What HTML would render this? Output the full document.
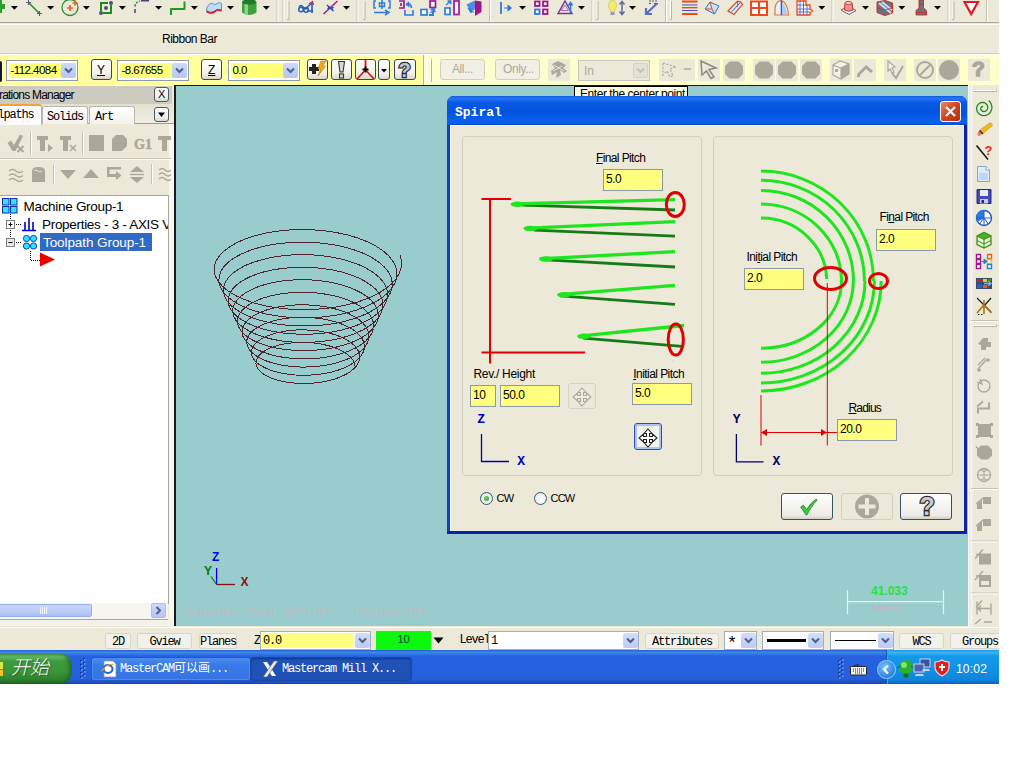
<!DOCTYPE html>
<html><head><meta charset="utf-8"><title>Mastercam Spiral</title>
<style>
html,body{margin:0;padding:0;background:#fff;}
body{width:1024px;height:768px;overflow:hidden;position:relative;font-family:"Liberation Sans",sans-serif;font-size:12px;color:#000;}
#scr{position:absolute;left:0;top:0;width:999px;height:684px;overflow:hidden;background:#ECE9D8;}
.abs,#scr div,#scr span,#scr svg{position:absolute;box-sizing:border-box;}
.mono{font-family:"Liberation Mono","Noto Sans CJK SC",monospace;font-size:11px;letter-spacing:-0.6px;white-space:nowrap;}
.sans{font-family:"Liberation Sans",sans-serif;white-space:nowrap;}
/* top toolbar */
#tb1{left:0;top:0;width:999px;height:23px;background:#ECE9D8;border-bottom:1px solid #A9A798;}
#rb{left:0;top:24px;width:999px;height:30px;background:#ECE9D8;border-top:1px solid #fff;border-bottom:1px solid #CFCCBE;}
#yb{left:0;top:54px;width:999px;height:31px;background:#FFFFA0;border-top:1px solid #fff;}
.combo{background:#fff;border:1px solid #8E9CA8;}
.combo .fill{background:#FFFF80;}
.dd{background:#C6D4FA;border-radius:2px;}
.xpbtn{border:1px solid #35506E;border-radius:3px;background:linear-gradient(#fff,#ECEBE5 85%,#D2D0C4);}
.dis{background:#ECE9D8;}
/* viewport */
#vp{left:174px;top:85px;width:794px;height:541px;background:#99CCCC;border-left:2px solid #1a1a1a;border-top:1px solid #1a1a1a;}

/* dialog */
#dlg{left:447px;top:96px;width:520px;height:438px;border-radius:7px 7px 0 0;background:#0A22AE;overflow:hidden;}
#dlgt{left:0;top:0;width:520px;height:29px;background:linear-gradient(#0B5CE2 0%,#2A74F8 8%,#0A5AE6 22%,#0452DC 55%,#0862EE 86%,#0560E8 94%,#0340C0 100%);}
#dlgb{left:3px;top:29px;width:514px;height:406px;background:#ECE9D8;border-top:1px solid #fff;border-left:1px solid #fff;}
.gb{border:1px solid #D0D0BF;border-radius:4px;}
.ed{background:#FFFF80;border:1px solid #8A9AA8;font-size:12px;letter-spacing:-0.5px;padding:2px 0 0 2px;white-space:nowrap;}
.lb{font-size:12px;letter-spacing:-0.35px;white-space:nowrap;line-height:14px;}
u{text-decoration:underline;text-underline-offset:1px;}

/* ops manager */
#om{left:0;top:85px;width:174px;height:542px;background:#ECE9D8;}
#omt{left:0;top:0;width:172px;height:19px;background:#CDCAC0;border-top:1px solid #fff;}
.sbtn{border:1px solid #4B5B6B;border-radius:3px;background:linear-gradient(#fff,#F0EFE8 70%,#DAD8CC);}
.tab{top:21px;height:18px;border:1px solid #B5B8A8;border-bottom:none;border-radius:3px 3px 0 0;background:linear-gradient(#fff,#F3F2EC);}
.g{fill:#ACA899;stroke:none;}

#st{left:0;top:627px;width:999px;height:24px;background:#ECE9D8;border-top:1px solid #fff;}
.stb{top:5px;height:16px;border:1px solid #D8D5C6;border-radius:3px;background:#F3F2EA;text-align:center;}
.stb span{position:static !important;font-size:12px;letter-spacing:-1.2px;line-height:13px;}
.scombo{top:3px;height:19px;background:#fff;border:1px solid #9DB0C0;}
.sdd{top:1px;width:15px;height:15px;border-radius:2px;background:linear-gradient(#D3DDFB,#BCCBF6);}
#tk{left:0;top:650px;width:999px;height:34px;background:linear-gradient(#2A5FD0 0%,#3C88EA 7%,#2662E0 18%,#2561DD 50%,#2460DB 85%,#1A44B0 100%);}

.yc{top:5px;height:21px;background:#fff;border:1px solid #8E9CA8;}
.yc .f{left:2px;top:2px;height:15px;background:#FFFF78;}
.yc .t{left:3.5px;top:2px;font-size:11.5px;letter-spacing:-0.55px;line-height:15px;}
.yc .d{top:2px;width:15px;height:15px;border-radius:2px;background:linear-gradient(#CDD9FB,#B6C7F5);}
.yb{top:4px;height:21px;border:1px solid #2C4A6C;border-radius:3px;background:linear-gradient(#fff,#F2F1EA 70%,#D9D7CA);}
.yd{top:4px;width:22px;height:22px;background:#ECE9D8;}
</style></head><body>
<div id="scr">
<div id="tb1"><svg width="999" height="22" viewBox="0 0 999 22" style="left:0;top:0;"><path d="M0 4 H2 V0 H0 Z M0 4 H5 V9 H2 V13 H0 Z" fill="#2CA02C"/><path d="M10.9 6 H17.9 L14.4 9.8 Z" fill="#000"/><path d="M47.1 6 H54.1 L50.6 9.8 Z" fill="#000"/><path d="M82.9 6 H89.9 L86.4 9.8 Z" fill="#000"/><path d="M118.9 6 H125.9 L122.4 9.8 Z" fill="#000"/><path d="M155.1 6 H162.1 L158.6 9.8 Z" fill="#000"/><path d="M190.9 6 H197.9 L194.4 9.8 Z" fill="#000"/><path d="M227.0 6 H234.0 L230.5 9.8 Z" fill="#000"/><path d="M262.8 6 H269.8 L266.3 9.8 Z" fill="#000"/><path d="M29 3 L39 13" stroke="#2C8C2C" stroke-width="1.6"/><path d="M26 2.5 h5 m-2.5 -2.5 v5 M37 13.5 h5 m-2.5 -2.5 v5" stroke="#50607A" stroke-width="1.1"/><circle cx="70" cy="7.5" r="8" fill="none" stroke="#2C8C2C" stroke-width="1.3"/><path d="M67 8 h6 m-3 -3 v6 M72.5 3 h5 m-2.5 -2.5 v5" stroke="#F06020" stroke-width="1.7"/><path d="M101 3 H111 V13 H101 Z" fill="none" stroke="#1C8C1C" stroke-width="2"/><rect x="108" y="0" width="5" height="5" fill="#ECE9D8"/><rect x="99" y="11" width="4" height="4" fill="#ECE9D8"/><circle cx="111" cy="3" r="2" fill="#50507A"/><circle cx="101" cy="13" r="2" fill="#50507A"/><circle cx="106" cy="8" r="2" fill="#50507A"/><path d="M135 13 V9" stroke="#50507A" stroke-width="1.6"/><path d="M135 6.5 Q135.5 2 140 1" stroke="#1C8C1C" stroke-width="1.6" fill="none" stroke-dasharray="2 1.5"/><rect x="141" y="0" width="8" height="1.5" fill="#50407A"/><path d="M171 15 V9 H184.5 V1.5" stroke="#1C9C1C" stroke-width="2" fill="none" stroke-linejoin="round"/><path d="M206.5 11 Q207 4 212 3 Q214 6 217 3.5 Q220 1.5 221.5 3.5 V10.5 Q217.5 8 215 11 Q211 13.5 206.5 11 Z" fill="#BCDCF8" stroke="#3C7CD0" stroke-width="0.8"/><path d="M206.5 11.5 Q211 14.5 215 11.5 Q217.5 8.5 221.5 11" stroke="#E01818" stroke-width="1.6" fill="none"/><path d="M242 2 V12.5 Q249 17.5 256.5 12.5 V2 Z" fill="#3CA03C"/><ellipse cx="249.2" cy="2" rx="7.2" ry="2.8" fill="#1C7C2C"/><path d="M244.5 4 V13.8 Q246 14.6 248 15 V4.6 Z" fill="#A4DCA4" opacity="0.8"/><path d="M277 0 V22" stroke="#C5C2B4"/><path d="M278 0 V22" stroke="#fff"/><path d="M283 0 V22" stroke="#C5C2B4"/><path d="M284 0 V22" stroke="#fff"/><path d="M288 1 V19" stroke="#fff" stroke-width="1"/><path d="M289 1 V19.5 H287" stroke="#B8B5A5" fill="none"/><path d="M299 7 q2 -3 4 0 q3 4 5 0 M305 9 L312 3 M307 11 L313 11 M312 3 V13" stroke="#2060C0" stroke-width="1.6" fill="none"/><circle cx="301" cy="9.5" r="2.3" fill="none" stroke="#2060C0" stroke-width="1.5"/><circle cx="306" cy="10" r="2.3" fill="none" stroke="#2060C0" stroke-width="1.5"/><path d="M309 4 L312.5 1.5 L313.5 5" stroke="#C02080" stroke-width="1.2" fill="none"/><path d="M323.5 14 L337.5 1" stroke="#A8208C" stroke-width="1.6"/><path d="M327 5 L333.5 11" stroke="#2050C0" stroke-width="1.6"/><path d="M329 6 l1 3 l-3 0z M332 10 l-1 -3 l3 0z" fill="#2050C0"/><path d="M343.0 6 H350.0 L346.5 9.8 Z" fill="#000"/><path d="M357 0 V22" stroke="#C5C2B4"/><path d="M358 0 V22" stroke="#fff"/><path d="M364 1 V19" stroke="#fff" stroke-width="1"/><path d="M365 1 V19.5 H363" stroke="#B8B5A5" fill="none"/><path d="M376 1 H374 V8 H376 M388 1 H390 V8 H388 M382 0 V9 M379.5 3 h5 v3.5 h-5z" stroke="#2C7CE0" stroke-width="1.5" fill="none"/><path d="M374 12.5 H387 M385 10 L389 12.5 L385 15" stroke="#2C7CE0" stroke-width="1.5" fill="none"/><path d="M399 1 H404 V8 H399 M401 3 v3" stroke="#A0148C" stroke-width="1.7" fill="none"/><path d="M405 10 V15 H413 V10 M407 4 Q411 3 411.5 8 M409 2 L406.5 4.5 L409.5 6.5" stroke="#2C7CE0" stroke-width="1.6" fill="none"/><rect x="430" y="1" width="5.5" height="6.5" fill="#fff" stroke="#A0148C" stroke-width="1.7"/><rect x="421" y="9.5" width="6" height="5.5" fill="#fff" stroke="#2C7CE0" stroke-width="1.7"/><path d="M429 15 H433 V11.5 M431 10 L433 8.5 L435 10" stroke="#2C7CE0" stroke-width="2" fill="none"/><path d="M429.5 13 L434 9 L436 12 Z" fill="#2C7CE0"/><rect x="454" y="1" width="5" height="13.5" fill="#fff" stroke="#A0148C" stroke-width="1.7"/><rect x="445" y="8" width="5" height="6.5" fill="#fff" stroke="#2C7CE0" stroke-width="1.7"/><path d="M446 5 L450.5 1 M447.5 1 h3.2 v3.2" stroke="#2C7CE0" stroke-width="1.5" fill="none"/><path d="M466.5 4.5 L475 0.5 V9 L471 12.5 Z" fill="#4C8CE8"/><path d="M475 0.5 L481.5 1.5 V12 L475 16 Z" fill="#A0148C"/><path d="M468 8 l4 2 -1 3 z M471 11 l3 1.5" fill="#2C7CE0" stroke="#2C7CE0"/><path d="M489.5 0 V22" stroke="#C5C2B4"/><path d="M490.5 0 V22" stroke="#fff"/><path d="M501 2 V14" stroke="#2C7CE0" stroke-width="1.8"/><path d="M504 8 H511 M508 5 L511.5 8 L508 11 Z" stroke="#2C7CE0" fill="#2C7CE0"/><path d="M519.0 6 H526.0 L522.5 9.8 Z" fill="#000"/><rect x="535" y="1.5" width="4.5" height="4.5" fill="#fff" stroke="#A0148C" stroke-width="1.8"/><rect x="543" y="1.5" width="4.5" height="4.5" fill="#fff" stroke="#A0148C" stroke-width="1.8"/><rect x="535" y="9.5" width="4.5" height="4.5" fill="#fff" stroke="#2C7CE0" stroke-width="1.8"/><rect x="543" y="9.5" width="4.5" height="4.5" fill="#fff" stroke="#A0148C" stroke-width="1.8"/><path d="M558 13.5 L565 1 L572 13.5 Z" fill="none" stroke="#7C2C9C" stroke-width="1.4"/><path d="M561 10.5 L565 5 L568.5 10.5 Z" fill="none" stroke="#9C5CB8" stroke-width="0.9"/><path d="M570.5 13 V4 M568.5 5.5 L570.5 2.5 L572.5 5.5" stroke="#2C7CE0" stroke-width="1.6" fill="none"/><path d="M578.0 6 H585.0 L581.5 9.8 Z" fill="#000"/><path d="M592 0 V22" stroke="#C5C2B4"/><path d="M593 0 V22" stroke="#fff"/><path d="M597 1 V19" stroke="#fff" stroke-width="1"/><path d="M598 1 V19.5 H596" stroke="#B8B5A5" fill="none"/><path d="M608.5 6 Q608.5 0.5 612.5 0.5 Q616.5 0.5 616.5 6 Q616 8.5 614.5 10 V12 H610.5 V10 Q609 8.5 608.5 6 Z" fill="#F4EC6C" stroke="#C8C040" stroke-width="0.6"/><rect x="610.5" y="12" width="4" height="3" fill="#9C9CA8"/><path d="M622 2 V14 M619.5 4.5 L622 1.5 L624.5 4.5 M619.5 11.5 L622 14.5 L624.5 11.5" stroke="#5C6CA0" stroke-width="1.5" fill="none"/><path d="M629.0 6 H636.0 L632.5 9.8 Z" fill="#000"/><path d="M657 3.5 L647 13 M646 8 V14 H652" stroke="#5C6CC0" stroke-width="2.2" fill="none"/><path d="M649 1 h9 M649 3.5 h3 m2 0 h4" stroke="#50507A" stroke-width="1.2" stroke-dasharray="2 1"/><path d="M665.5 0 V22" stroke="#C5C2B4"/><path d="M666.5 0 V22" stroke="#fff"/><path d="M670.5 1 V19" stroke="#fff" stroke-width="1"/><path d="M671.5 1 V19.5 H669.5" stroke="#B8B5A5" fill="none"/><path d="M682 1.5 H697.5 M682 14 H697.5" stroke="#F04818" stroke-width="2.2"/><path d="M682 5 H697.5 M682 10.5 H697.5" stroke="#4C50C0" stroke-width="1.2"/><path d="M682 7.7 H697.5" stroke="#F04818" stroke-width="1.4"/><path d="M705 9 L710 2 L719 6 L714.5 14 Z" fill="#C8E4F8" stroke="#3C6CC0" stroke-width="1"/><path d="M710 2 L712 9 L714.5 14 M705 9 L712 9" stroke="#F04818" stroke-width="1" fill="none"/><path d="M728 11 L737 1.5 Q741 1 742.5 4.5 L734 14.5 Z" fill="#D8ECFA" stroke="#F04818" stroke-width="1.2"/><path d="M731 12.5 L740 3 M737 1.5 Q738.5 4 737 7" stroke="#3C6CC0" stroke-width="1" fill="none"/><path d="M751 1.5 H767 V15 H751 Z M751 8 H767 M759 1.5 V15" fill="#fff" stroke="#F04818" stroke-width="2"/><path d="M775 15 V8 Q776 1 781.5 0.5 Q787.5 3 788.5 15 Z" fill="#E8F0FA" stroke="#E87030" stroke-width="1.2"/><path d="M781.5 0.5 V15" stroke="#3060C0" stroke-width="1.6"/><path d="M782.5 3 Q786 6 787 14 H782.5 Z" fill="#A8CCF0"/><path d="M797 1 H806 V5 H810 V9 L812.5 11 L810 13 V15 H797 Z" fill="#fff" stroke="#F04818" stroke-width="1.3"/><path d="M800 1 V15 M803.5 1 V15 M807 5 V15 M797 5 H806 M797 9 H810 M797 12 H810" stroke="#4C60D0" stroke-width="0.9"/><path d="M818.3 6 H825.3 L821.8 9.8 Z" fill="#000"/><path d="M832 0 V22" stroke="#C5C2B4"/><path d="M833 0 V22" stroke="#fff"/><path d="M841 10 L848 6.5 L856 10.5 L849 14.5 Z" fill="#fff" stroke="#606070" stroke-width="1"/><path d="M845 3 Q848.5 0.5 852 3 L853 10 Q848.5 12.5 844.5 10 Z" fill="#F09090" stroke="#C03030" stroke-width="1"/><ellipse cx="848.5" cy="3" rx="3.5" ry="1.6" fill="#F8C0C0" stroke="#C03030" stroke-width="0.8"/><path d="M862.0 6 H869.0 L865.5 9.8 Z" fill="#000"/><path d="M877 2 L885 0.5 L892.5 3 V13 L885 15.5 L877 12.5 Z" fill="#70707C" stroke="#C03030" stroke-width="1"/><path d="M879 3 L891 13 M882 2 L892 10" stroke="#C8DCF0" stroke-width="2.2"/><path d="M877 8 L885 10 L892.5 8" stroke="#C03030" stroke-width="0.8" fill="none"/><path d="M898.3 6 H905.3 L901.8 9.8 Z" fill="#000"/><path d="M919 0 H923.5 V8 L926.5 10.5 V15 H916 V10.5 L919 8 Z" fill="#707078" stroke="#C03030" stroke-width="0.9"/><path d="M916 12.5 H926.5 M919 4 H923.5" stroke="#C03030" stroke-width="0.9"/><path d="M934.0 6 H941.0 L937.5 9.8 Z" fill="#000"/><path d="M948 0 V22" stroke="#C5C2B4"/><path d="M949 0 V22" stroke="#fff"/><path d="M953 1 V19" stroke="#fff" stroke-width="1"/><path d="M954 1 V19.5 H952" stroke="#B8B5A5" fill="none"/><path d="M964.5 2 H978 L971.2 14 Z" fill="#fff" stroke="#E01828" stroke-width="2.2" stroke-linejoin="miter"/><path d="M986.5 0 V22" stroke="#C5C2B4"/><path d="M987.5 0 V22" stroke="#fff"/></svg></div>
<div id="rb"><span class="sans" style="left:162px;top:7px;font-size:12px;letter-spacing:-0.5px;">Ribbon Bar</span></div>
<div id="yb"><div style="left:-3px;top:6px;width:5px;height:21px;background:#101840;border-radius:2px;"></div><div class="yc" style="left:6px;width:72px;"><div class="f" style="width:52px;"></div><span class="t sans">-112.4084</span><div class="d" style="left:54px;"><svg width="15" height="15" style="left:0;top:0"><path d="M4 5.5 L7.5 9 L11 5.5" stroke="#4D6185" stroke-width="2" fill="none"/></svg></div></div><div class="yb" style="left:91px;width:21px;"><span class="sans" style="left:5px;top:3px;font-size:12px;line-height:14px;"><u>Y</u></span></div><div class="yc" style="left:117px;width:72px;"><div class="f" style="width:52px;"></div><span class="t sans">-8.67655</span><div class="d" style="left:54px;"><svg width="15" height="15" style="left:0;top:0"><path d="M4 5.5 L7.5 9 L11 5.5" stroke="#4D6185" stroke-width="2" fill="none"/></svg></div></div><div class="yb" style="left:201px;width:21px;"><span class="sans" style="left:6px;top:3px;font-size:12px;line-height:14px;"><u>Z</u></span></div><div class="yc" style="left:228px;width:72px;"><div class="f" style="width:52px;"></div><span class="t sans">0.0</span><div class="d" style="left:54px;"><svg width="15" height="15" style="left:0;top:0"><path d="M4 5.5 L7.5 9 L11 5.5" stroke="#4D6185" stroke-width="2" fill="none"/></svg></div></div><div class="yb" style="left:307px;width:21px;"><svg width="19" height="20" style="left:0;top:0"><path d="M1 7 H4 V4 H8 V7 H11 V11 H8 V14 H4 V11 H1 Z" fill="#222"/><path d="M13 1 L18 1 L14.5 6 L17.5 6 L10 16 L12.5 9 L10 9 Z" fill="#F8A818" stroke="#C07008" stroke-width="0.6"/></svg></div><div class="yb" style="left:331px;width:21px;"><svg width="19" height="20" style="left:0;top:0"><path d="M6.5 1.5 H12.5 L11 12 H8 Z" fill="#D8D8D8" stroke="#333" stroke-width="1.1"/><rect x="7.5" y="14" width="4" height="4" fill="#D8D8D8" stroke="#333" stroke-width="1.1"/></svg></div><div class="yb" style="left:355px;width:21px;"><svg width="19" height="20" style="left:0;top:0"><path d="M9.5 0 V10 L1 19 M9.5 10 L18 19" stroke="#D81818" stroke-width="1.8" fill="none"/><path d="M6.5 9.5 h6 M9.5 6.5 v6" stroke="#000" stroke-width="1.8"/></svg></div><div class="yb" style="left:378px;width:12px;"><svg width="10" height="20" style="left:0;top:0"><path d="M2 9 H8 L5 12.5 Z" fill="#000"/></svg></div><div class="yb" style="left:394px;width:22px;"><span class="sans" style="left:3.5px;top:-1px;font-size:20px;line-height:22px;font-weight:bold;color:#C4C4CC;-webkit-text-stroke:2.4px #2A2A30;paint-order:stroke fill;">?</span></div><div style="left:425px;top:0;width:574px;height:30px;background:#FFFFCE;"></div><div style="left:423px;top:0px;width:1px;height:30px;background:#B8B58C;"></div><div style="left:424px;top:0px;width:1px;height:30px;background:#fff;"></div><div style="left:430px;top:4px;width:1px;height:22px;background:#fff;"></div><div style="left:431px;top:4px;width:1px;height:23px;background:#B8B590;"></div><div style="left:440px;top:4px;width:45px;height:21px;border:1px solid #D2CFBF;border-radius:3px;background:#F2F0E4;"><span class="sans" style="left:11px;top:2px;font-size:12px;letter-spacing:-0.4px;color:#ACA899;">All...</span></div><div style="left:495px;top:4px;width:45px;height:21px;border:1px solid #D2CFBF;border-radius:3px;background:#F2F0E4;"><span class="sans" style="left:7px;top:2px;font-size:12px;letter-spacing:-0.4px;color:#ACA899;">Only...</span></div><div class="yd" style="left:548px;width:22px;"><svg width="22" height="22" viewBox="0 0 22 22" style="left:0;top:0"><path d="M4 5 L10 2 L18 6 L15 9 L19 12 L16 14 L12 11 L13 16 L8 19 L9 13 L4 16 L3 12 L7 9 Z" fill="#ACA899"/><path d="M6 6 L16 12 M5 12 L14 7" stroke="#ECE9D8" stroke-width="1"/></svg></div><div style="left:578px;top:5px;width:72px;height:21px;background:#ECE9D8;border:1px solid #C9C7BA;"><span class="sans" style="left:5px;top:3px;font-size:12px;color:#ACA899;">In</span><div style="left:54px;top:2px;width:15px;height:15px;border-radius:2px;background:#E4E2D4;border:1px solid #D6D3C4;"><svg width="13" height="13" style="left:0;top:0"><path d="M3 4.5 L6.5 8 L10 4.5" stroke="#C4C1B2" stroke-width="2" fill="none"/></svg></div></div><div class="yd" style="left:659px;width:36px;"><svg width="36" height="22" viewBox="0 0 36 22" style="left:0;top:0"><path d="M4 4 L17 8 L11 10 L14 17 L11 18 L8 12 L4 16 Z" fill="none" stroke="#ACA899" stroke-width="1.2" stroke-dasharray="2 1.5"/><path d="M25 10 H32" stroke="#ACA899" stroke-width="1.5"/></svg></div><div class="yd" style="left:698px;width:22px;"><svg width="22" height="22" viewBox="0 0 22 22" style="left:0;top:0"><path d="M3 2 L18 9 L11 10.5 L16 18 L13 19.5 L8.5 12 L4 16 Z" fill="#ECE9D8" stroke="#8C897C" stroke-width="1.5"/></svg></div><div class="yd" style="left:723px;width:22px;"><svg width="22" height="22" viewBox="0 0 22 22" style="left:0;top:0"><path d="M6.5 2.5 H15.5 L20 7 V15 L15.5 19.5 H6.5 L2 15 V7 Z" fill="#ACA899"/></svg></div><div class="yd" style="left:753px;width:22px;"><svg width="22" height="22" viewBox="0 0 22 22" style="left:0;top:0"><path d="M6.5 2.5 H15.5 L20 7 V15 L15.5 19.5 H6.5 L2 15 V7 Z" fill="#ACA899"/></svg></div><div class="yd" style="left:776px;width:22px;"><svg width="22" height="22" viewBox="0 0 22 22" style="left:0;top:0"><path d="M6.5 2.5 H15.5 L20 7 V15 L15.5 19.5 H6.5 L2 15 V7 Z" fill="#ACA899"/></svg></div><div class="yd" style="left:800px;width:22px;"><svg width="22" height="22" viewBox="0 0 22 22" style="left:0;top:0"><path d="M6.5 2.5 H15.5 L20 7 V15 L15.5 19.5 H6.5 L2 15 V7 Z" fill="#ACA899"/></svg></div><div class="yd" style="left:830px;width:22px;"><svg width="22" height="22" viewBox="0 0 22 22" style="left:0;top:0"><path d="M3 6 L10 2 L19 5 V15 L11 20 L3 16 Z" fill="#F4F2EA" stroke="#ACA899" stroke-width="1.2"/><path d="M3 6 L11 9 L19 5 M11 9 V20" stroke="#ACA899" stroke-width="1.2" fill="none"/><path d="M11 9 L19 5 V15 L11 20 Z" fill="#ACA899"/><rect x="5" y="10" width="3" height="3" fill="#ACA899"/></svg></div><div class="yd" style="left:854px;width:22px;"><svg width="22" height="22" viewBox="0 0 22 22" style="left:0;top:0"><path d="M3 15 L12 6 L19 12 L17 14 L12 10 L6 16 V18 H3 Z" fill="#ACA899"/></svg></div><div class="yd" style="left:884px;width:22px;"><svg width="22" height="22" viewBox="0 0 22 22" style="left:0;top:0"><path d="M4 2 L11 8 L8 9 L10 13 L8 14 L6 10 L4 12 Z" fill="#F4F2EA" stroke="#ACA899" stroke-width="1.2"/><path d="M8 14 L12 19 L19 7" stroke="#ACA899" stroke-width="2" fill="none"/></svg></div><div class="yd" style="left:914px;width:22px;"><svg width="22" height="22" viewBox="0 0 22 22" style="left:0;top:0"><circle cx="11" cy="11" r="8" fill="none" stroke="#ACA899" stroke-width="2"/><path d="M5.5 16.5 L16.5 5.5" stroke="#ACA899" stroke-width="2"/></svg></div><div class="yd" style="left:938px;width:22px;"><svg width="22" height="22" viewBox="0 0 22 22" style="left:0;top:0"><circle cx="11" cy="11" r="10" fill="#ACA899"/></svg></div><div class="yd" style="left:968px;width:22px;"><span class="sans" style="left:4px;top:-1px;font-size:21px;line-height:22px;font-weight:bold;color:#ACA899;-webkit-text-stroke:1.4px #ACA899;">?</span></div></div>
<div id="vp"><svg width="794" height="542" viewBox="174 85 794 542" style="left:-2px;top:-1px;"><polyline points="400.1,255.4 401.5,261.3 401.3,267.2 399.5,273.1 396.1,278.8 391.2,284.2 384.8,289.3 377.2,294.0 368.3,298.2 358.4,301.8 347.6,304.7 336.2,307.0 324.3,308.6 312.1,309.5 299.8,309.6 287.7,309.0 276.0,307.7 264.7,305.7 254.3,303.0 244.7,299.7 236.2,295.9 229.0,291.6 223.1,287.0 218.6,282.0 215.6,276.8 214.2,271.4 214.4,266.1 216.2,260.8 219.5,255.7 224.3,250.8 230.5,246.2 238.0,242.1 246.6,238.5 256.3,235.4 266.8,232.9 277.9,231.1 289.5,230.0 301.4,229.6 313.4,229.9 325.2,230.9 336.7,232.6 347.6,235.0 357.8,238.0 367.2,241.7 375.4,245.8 382.5,250.4 388.3,255.4 392.6,260.7 395.5,266.2 396.8,271.8 396.7,277.4 394.9,283.0 391.7,288.4 387.0,293.6 381.0,298.5 373.7,302.9 365.3,306.9 355.8,310.3 345.6,313.2 334.7,315.4 323.4,316.9 311.8,317.7 300.2,317.8 288.7,317.3 277.5,316.0 266.8,314.1 256.9,311.6 247.8,308.5 239.7,304.9 232.9,300.8 227.2,296.4 223.0,291.7 220.2,286.7 218.9,281.7 219.1,276.6 220.7,271.6 223.9,266.7 228.5,262.1 234.3,257.8 241.5,253.9 249.7,250.5 258.8,247.6 268.8,245.2 279.4,243.5 290.4,242.5 301.7,242.1 313.1,242.4 324.3,243.4 335.2,245.0 345.5,247.3 355.2,250.2 364.1,253.6 371.9,257.6 378.6,262.0 384.1,266.7 388.2,271.7 390.9,276.9 392.2,282.3 392.0,287.6 390.4,292.9 387.3,298.1 382.9,303.0 377.1,307.6 370.2,311.9 362.2,315.6 353.3,318.9 343.6,321.6 333.3,323.7 322.5,325.1 311.6,325.9 300.5,326.0 289.6,325.5 279.0,324.3 268.9,322.5 259.5,320.2 250.9,317.2 243.3,313.8 236.7,310.0 231.4,305.8 227.4,301.4 224.8,296.7 223.5,291.9 223.7,287.1 225.3,282.4 228.3,277.8 232.6,273.5 238.2,269.4 244.9,265.7 252.7,262.5 261.4,259.8 270.8,257.6 280.8,256.0 291.3,255.0 302.0,254.6 312.7,254.9 323.3,255.9 333.6,257.4 343.4,259.6 352.6,262.4 361.0,265.6 368.4,269.4 374.7,273.5 379.9,278.0 383.8,282.8 386.4,287.7 387.6,292.8 387.4,297.9 385.8,302.9 382.9,307.8 378.7,312.4 373.3,316.8 366.7,320.8 359.2,324.4 350.7,327.4 341.6,330.0 331.8,332.0 321.7,333.4 311.3,334.1 300.9,334.2 290.6,333.8 280.5,332.7 271.0,331.0 262.1,328.7 254.0,326.0 246.8,322.8 240.6,319.2 235.6,315.2 231.8,311.0 229.3,306.7 228.2,302.2 228.3,297.7 229.9,293.2 232.7,288.9 236.8,284.8 242.0,281.0 248.4,277.5 255.7,274.5 263.9,271.9 272.8,269.9 282.3,268.4 292.2,267.5 302.2,267.2 312.4,267.5 322.4,268.4 332.1,269.9 341.4,271.9 350.0,274.5 357.9,277.6 364.9,281.2 370.8,285.1 375.7,289.3 379.4,293.8 381.8,298.5 382.9,303.3 382.7,308.1 381.3,312.8 378.5,317.4 374.6,321.8 369.4,325.9 363.3,329.7 356.1,333.1 348.2,336.0 339.5,338.4 330.4,340.3 320.8,341.6 311.0,342.3 301.2,342.5 291.5,342.0 282.1,341.0 273.1,339.4 264.7,337.3 257.1,334.7 250.3,331.7 244.5,328.3 239.8,324.7 236.2,320.7 233.9,316.6 232.8,312.4 233.0,308.2 234.4,304.0 237.1,300.0 240.9,296.2 245.9,292.6 251.9,289.4 258.8,286.5 266.5,284.1 274.9,282.2 283.8,280.8 293.0,280.0 302.5,279.7 312.0,280.0 321.4,280.9 330.6,282.3 339.3,284.2 347.4,286.7 354.8,289.6 361.3,292.9 366.9,296.6 371.5,300.6 375.0,304.9 377.2,309.3 378.3,313.8 378.1,318.3 376.7,322.7 374.1,327.1 370.4,331.2 365.6,335.1 359.8,338.6 353.1,341.8 345.6,344.6 337.5,346.8 328.9,348.6 319.9,349.8 310.8,350.5 301.5,350.7 292.4,350.2 283.6,349.3 275.2,347.8 267.3,345.9 260.2,343.5 253.8,340.7 248.4,337.5 244.0,334.1 240.7,330.4 238.5,326.6 237.4,322.7 237.6,318.7 239.0,314.8 241.5,311.1 245.1,307.5 249.7,304.2 255.3,301.2 261.8,298.5 269.0,296.3 276.9,294.5 285.2,293.3 293.9,292.5 302.8,292.2 311.7,292.5 320.5,293.4 329.0,294.7 337.2,296.5 344.8,298.9 351.7,301.6 357.8,304.7 363.1,308.2 367.3,312.0 370.5,315.9 372.7,320.0 373.6,324.3 373.5,328.5 372.2,332.7 369.7,336.7 366.2,340.6 361.7,344.2 356.3,347.6 350.1,350.5 343.1,353.1 335.5,355.2 327.4,356.9 319.1,358.1 310.5,358.7 301.9,358.9 293.4,358.5 285.1,357.6 277.3,356.3 269.9,354.5 263.3,352.2 257.3,349.6 252.3,346.7 248.2,343.5 245.1,340.1 243.0,336.6 242.1,332.9 242.3,329.3 243.5,325.7 245.9,322.2 249.2,318.8 253.6,315.8 258.8,313.0 264.9,310.5 271.6,308.5 278.9,306.9 286.7,305.7 294.8,305.0 303.0,304.8 311.3,305.1 319.5,305.9 327.5,307.1 335.1,308.9 342.2,311.0 348.6,313.6 354.3,316.5 359.2,319.8 363.1,323.3 366.1,327.0 368.1,330.8 369.0,334.8 368.8,338.7 367.6,342.6 365.3,346.4 362.1,350.0 357.9,353.4 352.9,356.5 347.0,359.3 340.5,361.7 333.5,363.7 326.0,365.2 318.2,366.3 310.2,366.9 302.2,367.1 294.3,366.7 286.7,365.9 279.4,364.7 272.6,363.0 266.4,361.0 260.9,358.6 256.2,355.9 252.4,352.9 249.5,349.8 247.6,346.5 246.7,343.2 246.9,339.8 248.1,336.5 250.2,333.2 253.4,330.2 257.4,327.4 262.3,324.8 267.9,322.6 274.1,320.7 280.9,319.2 288.1,318.1 295.6,317.5 303.3,317.3 311.0,317.6 318.6,318.3 326.0,319.5 333.0,321.2 339.5,323.2 345.5,325.6 350.8,328.3 355.3,331.3 358.9,334.6 361.7,338.0 363.5,341.6 364.3,345.2 364.2,348.9 363.1,352.5 361.0,356.0 357.9,359.4 354.1,362.5 349.4,365.4 344.0,368.0 338.0,370.2 331.5,372.1 324.5,373.5 317.3,374.5 310.0,375.1 302.6,375.3 295.3,375.0 288.2,374.3 281.5,373.1 275.2,371.6 269.4,369.7 264.4,367.5 260.1,365.1 256.5,362.4 253.9,359.5 252.2,356.5 251.4,353.4 251.5,350.3 252.6,347.3 254.6,344.3 257.5,341.5 261.3,339.0 265.8,336.6 270.9,334.6 276.7,332.9 283.0,331.5 289.6,330.5 296.5,330.0 303.6,329.9 310.7,330.1 317.7,330.8 324.4,332.0 330.9,333.5 336.9,335.4 342.4,337.6 347.3,340.1 351.4,342.9 354.8,345.9 357.3,349.1 358.9,352.4 359.7,355.7 359.6,359.1 358.5,362.5 356.6,365.7 353.8,368.8 350.2,371.7 345.9,374.3 340.9,376.7 335.4,378.8 329.4,380.5 323.1,381.8 316.4,382.8 309.7,383.3 302.9,383.5 296.2,383.2 289.7,382.6 283.5,381.6 277.8,380.2 272.5,378.5 267.9,376.5 263.9,374.2 260.7,371.8 258.3,369.2 256.7,366.4 256.0,363.6 256.2,360.8 257.2,358.1 259.0,355.4 261.7,352.9 265.1,350.5 269.2,348.4 274.0,346.6 279.3,345.0 285.0,343.8 291.1,343.0 297.4,342.5 303.8,342.4 310.3,342.7 316.7,343.3 322.9,344.4 328.8,345.8 334.3,347.5 339.3,349.6 343.7,351.9 347.5,354.5 350.6,357.2 352.9,360.1 354.4,363.2 355.1,366.2" fill="none" stroke="#50222B" stroke-width="1" shape-rendering="crispEdges"/><path d="M216.6 568 V584.5" stroke="#0000D8" stroke-width="1.3"/><path d="M216.6 584.5 H235" stroke="#8A1010" stroke-width="1.3"/><path d="M216.6 584.5 L211 576.5" stroke="#0A7A0A" stroke-width="1.2"/><path d="M847.5 590 V614 M943.5 590 V614 M847.5 601.7 H943.5" stroke="#EAF4F4" stroke-width="1.2" fill="none"/></svg><div style="left:0;top:1px;width:1px;height:1px;overflow:visible;"><span style="left:36px;top:464px;color:#0000E0;font-weight:bold;font-size:12px;font-family:'Liberation Sans',sans-serif;line-height:12px;">Z</span><span style="left:28px;top:478px;color:#0A7A0A;font-weight:bold;font-size:12px;font-family:'Liberation Sans',sans-serif;line-height:12px;">Y</span><span style="left:64.5px;top:488.5px;color:#8A1010;font-weight:bold;font-size:12px;font-family:'Liberation Sans',sans-serif;line-height:12px;">X</span><span class="sans" style="left:695px;top:497.5px;font-weight:bold;font-size:12px;line-height:12px;color:#1EE63C;">41.033</span><span class="sans" style="left:697px;top:516.5px;font-size:10px;line-height:10px;color:#D8B0B8;opacity:0.6;">Metric</span><span class="mono" style="left:8px;top:519.5px;font-size:12px;line-height:12px;letter-spacing:-1.2px;color:#D4B4BC;opacity:0.6;">Gview:Not Saved&nbsp;&nbsp;WCS:TOP&nbsp;&nbsp;&nbsp;&nbsp;T/Cplane:TOP</span></div></div>
<div id="om">
<div id="omt"><span class="sans" style="left:-1px;top:2px;font-size:12px;letter-spacing:-0.8px;">rations Manager</span></div>
<div class="sbtn" style="left:154px;top:2px;width:15px;height:15px;"><span class="sans" style="left:3px;top:0px;font-size:11px;line-height:13px;">X</span></div>
<div style="left:0;top:19px;width:172px;height:20px;background:linear-gradient(#E4E1D2,#F1EFE4);"></div>
<div style="left:-2px;top:38px;width:176px;height:503px;border:1px solid #9A9D8F;border-right:none;border-bottom:none;background:#ECE9D8;"></div><div style="left:169px;top:39px;width:5px;height:503px;background:#F7F6F1;"></div><div style="left:0;top:534px;width:172px;height:7px;background:#F3F2EA;"></div>
<div class="tab" style="left:-4px;top:19px;width:46px;height:21px;background:#FCFCFE;border-top:2px solid #F1A532;z-index:2;"><span class="mono" style="left:0.5px;top:2px;font-size:12px;letter-spacing:-1.2px;">lpaths</span></div>
<div class="tab" style="left:42px;width:46px;"><span class="mono" style="left:4px;top:3px;font-size:12px;letter-spacing:-1.2px;">Solids</span></div>
<div class="tab" style="left:89px;width:46px;"><span class="mono" style="left:5px;top:3px;font-size:12px;letter-spacing:-1.2px;">Art</span></div>
<div class="sbtn" style="left:154px;top:22px;width:15px;height:15px;"><svg width="13" height="13" style="left:0;top:0"><path d="M3 4.5 H10 L6.5 9 Z" fill="#000"/></svg></div>
<svg width="171" height="72" viewBox="0 124 171 72" style="left:0;top:39px;"><path d="M0 158.5 H171" stroke="#C9C6B8" stroke-width="1"/><path d="M0 159.5 H171" stroke="#fff" stroke-width="1"/><path d="M30.5 131 V155 M82.5 131 V155 M53.5 164 V184 M151.5 164 V184" stroke="#C5C2B4" stroke-width="1"/><path d="M31.5 131 V155 M83.5 131 V155 M54.5 164 V184 M152.5 164 V184" stroke="#fff" stroke-width="1"/><path d="M7.5 143 L11 140.5 L14 145 L20 134.5 L23 136 L15.5 151 L12.5 151 Z" class="g"/><path d="M17.5 146 L23.5 152 M23.5 146 L17.5 152" stroke="#ACA899" stroke-width="2"/><path d="M37 136 H48 V140 H45 V151 H40 V140 H37 Z M48 144 L53 148 L48 152 Z" class="g"/><path d="M60 136 H71 V140 H68 V151 H63 V140 H60 Z" class="g"/><path d="M70 145 L76 151 M76 145 L70 151" stroke="#ACA899" stroke-width="1.6"/><rect x="89" y="135" width="15" height="16" class="g"/><path d="M116 135 H123 L127 139 V146 L122 151 H112 V139 Z" class="g"/><text x="134" y="148.5" font-family="Liberation Serif,serif" font-weight="bold" font-size="14" fill="#ACA899" stroke="#ACA899" stroke-width="0.5" textLength="18">G1</text><path d="M158 136 H171 V140 H167 V151 H162 V140 H158 Z" class="g"/><path d="M9 171 q3.5 -3 7 0 t7 0 M9 175.5 q3.5 -3 7 0 t7 0 M9 180 q3.5 -3 7 0 t7 0" stroke="#ACA899" stroke-width="1.5" fill="none"/><path d="M32 182 V171 Q32 167 38.5 167 Q45 167 45 171 V182 Z" class="g"/><path d="M34 171 q2 -2 4 0 t4 0" stroke="#ECE9D8" stroke-width="1" fill="none"/><path d="M60 170 H76 L68 179 Z" class="g"/><path d="M83 178 H99 L91 169 Z" class="g"/><path d="M107 167 H121 V169.5 H109.5 V174 H116 V171 L121.5 175.5 L116 180 V177 H107 Z" class="g"/><path d="M130 172 H144 L137 166 Z M130 177 H144 L137 183 Z" class="g"/><path d="M130 174.5 H144" stroke="#ACA899" stroke-width="1.4"/><path d="M159 170 q3 -3 6 0 t6 0 M159 174.5 q3 -3 6 0 t6 0 M159 179 q3 -3 6 0 t6 0" stroke="#ACA899" stroke-width="1.5" fill="none"/></svg>
<div style="left:-2px;top:110px;width:171px;height:409px;background:#fff;border:1px solid #A5A89A;border-bottom:none;"></div>
<svg width="169" height="80" viewBox="0 195 169 80" style="left:0;top:110px;"><rect x="2.5" y="198.5" width="6.5" height="6.5" fill="#2FE4FF" stroke="#1A2CA8" stroke-width="1"/><rect x="10.5" y="198.5" width="6.5" height="6.5" fill="#2FE4FF" stroke="#1A2CA8" stroke-width="1"/><rect x="2.5" y="206.5" width="6.5" height="6.5" fill="#2FE4FF" stroke="#1A2CA8" stroke-width="1"/><rect x="10.5" y="206.5" width="6.5" height="6.5" fill="#2FE4FF" stroke="#1A2CA8" stroke-width="1"/><path d="M10.5 214 V242 M14 224.5 H22 M14 242.5 H22 M30.5 251 V260.5 H41" stroke="#000" stroke-width="1" stroke-dasharray="1 1" fill="none"/><rect x="6.5" y="220.5" width="8" height="8" fill="#fff" stroke="#808080"/><path d="M8.5 224.5 H12.5 M10.5 222.5 V226.5" stroke="#000"/><rect x="6.5" y="238.5" width="8" height="8" fill="#E8E8E8" stroke="#808080"/><path d="M8.5 242.5 H12.5" stroke="#000"/><path d="M22 230.5 H36 M25 230 V222 M29 230 V218 M33 230 V222" stroke="#0000D0" stroke-width="1.6" fill="none"/><circle cx="26.5" cy="238.5" r="3.1" fill="#2FE4FF" stroke="#0040C0" stroke-width="1"/><circle cx="33.5" cy="238.5" r="3.1" fill="#2FE4FF" stroke="#0040C0" stroke-width="1"/><circle cx="26.5" cy="246" r="3.1" fill="#2FE4FF" stroke="#0040C0" stroke-width="1"/><circle cx="33.5" cy="246" r="3.1" fill="#2FE4FF" stroke="#0040C0" stroke-width="1"/><rect x="40" y="233" width="112" height="18" fill="#316AC5"/><path d="M40 252.5 L55 259.5 L40 266.5 Z" fill="#E80000"/></svg>
<span class="sans" style="left:23.5px;top:114px;font-size:13.5px;letter-spacing:-0.3px;">Machine Group-1</span>
<div style="left:42px;top:129px;width:126px;height:20px;overflow:hidden;"><span class="sans" style="left:0;top:3px;font-size:13.5px;letter-spacing:-0.3px;">Properties - 3 - AXIS V</span></div>
<span class="sans" style="left:43px;top:150px;color:#fff;font-size:13.5px;letter-spacing:-0.08px;">Toolpath Group-1</span>
<div style="left:0;top:518px;width:168px;height:17px;background:#F6F5F0;border-bottom:1px solid #A5A89A;"></div>
<div style="left:-6px;top:519px;width:98px;height:13px;border:1px solid #98B0E8;border-radius:2px;background:linear-gradient(#C9D7FC,#B8C9F8 70%,#A9BCF2);"><svg width="10" height="8" style="left:44px;top:2px"><path d="M1.5 0 V7 M3.5 0 V7 M5.5 0 V7 M7.5 0 V7" stroke="#EEF3FF"/></svg></div>
<div style="left:151px;top:518px;width:15px;height:15px;border:1px solid #A9BEF2;border-radius:2px;background:linear-gradient(#CCD9FC,#B4C6F6);"><svg width="13" height="13" style="left:0;top:0"><path d="M4.5 3 L8 6.5 L4.5 10" stroke="#4D6185" stroke-width="2" fill="none"/></svg></div>
</div>
<div style="left:574px;top:86px;width:114px;height:14px;background:#FFFFE4;border:1px solid #000;"><span class="sans" style="left:5px;top:0px;font-size:12px;letter-spacing:-0.45px;">Enter the center point</span></div>
<div id="dlg"><div id="dlgt"><span class="mono" style="left:8px;top:9px;font-size:13px;font-weight:bold;color:#fff;letter-spacing:0;">Spiral</span>
<div style="left:493px;top:5px;width:21px;height:21px;border:1px solid #fff;border-radius:3px;background:linear-gradient(135deg,#E9876B,#D2431F 50%,#B5320E);"><svg width="19" height="19" viewBox="0 0 19 19" style="left:0;top:0"><path d="M5 5 L14 14 M14 5 L5 14" stroke="#fff" stroke-width="2.2" stroke-linecap="butt"/></svg></div>
</div>
<div style="left:0;top:29px;width:3px;height:406px;background:#0C40D2;"></div><div id="dlgb"></div>
<div class="gb" style="left:15px;top:40px;width:240px;height:340px;"></div>
<div class="gb" style="left:266px;top:40px;width:240px;height:340px;"></div>
<svg width="520" height="438" viewBox="447 96 520 438" style="left:0;top:0;"><g fill="none" stroke-linecap="round"><path d="M522 205.2 L675 210" stroke="#167A16" stroke-width="2.8" stroke-linecap="butt"/><path d="M675 199.6 L515.5 203.9" stroke="#1EE61E" stroke-width="3.3" stroke-linecap="butt"/><ellipse cx="517.5" cy="204.3" rx="7" ry="2.7" fill="#1EE61E" stroke="none"/><path d="M534 230.2 L675 236.2" stroke="#167A16" stroke-width="2.8" stroke-linecap="butt"/><path d="M675 221.7 L528.5 228.1" stroke="#1EE61E" stroke-width="3.3" stroke-linecap="butt"/><ellipse cx="530.5" cy="228.5" rx="7" ry="2.7" fill="#1EE61E" stroke="none"/><path d="M542 259.7 L675 267" stroke="#167A16" stroke-width="2.8" stroke-linecap="butt"/><path d="M675 251.7 L544 258.59999999999997" stroke="#1EE61E" stroke-width="3.3" stroke-linecap="butt"/><ellipse cx="546" cy="259.0" rx="7" ry="2.7" fill="#1EE61E" stroke="none"/><path d="M560 295.9 L675 304.4" stroke="#167A16" stroke-width="2.8" stroke-linecap="butt"/><path d="M675 285.4 L562 294.4" stroke="#1EE61E" stroke-width="3.3" stroke-linecap="butt"/><ellipse cx="564" cy="294.8" rx="7" ry="2.7" fill="#1EE61E" stroke="none"/><path d="M583.2 338.2 L682 346.4" stroke="#167A16" stroke-width="2.8" stroke-linecap="butt"/><path d="M684 325.5 L582 335.9" stroke="#1EE61E" stroke-width="3.3" stroke-linecap="butt"/><ellipse cx="584" cy="336.3" rx="7" ry="2.7" fill="#1EE61E" stroke="none"/></g><path d="M481.5 199 H511 M490 199 V363.5 M481.5 352.5 H585" stroke="#E00000" stroke-width="2" fill="none"/><ellipse cx="675.3" cy="204.5" rx="9" ry="12" fill="none" stroke="#E00000" stroke-width="3"/><ellipse cx="675.8" cy="339.6" rx="7.6" ry="15.5" fill="none" stroke="#E00000" stroke-width="3"/><path d="M481.5 434 V461.5 H509" stroke="#0000B0" stroke-width="1.3" fill="none"/><g fill="none" stroke="#1EE61E" stroke-width="3"><path d="M761 218.1 A65.7 62.9 0 0 1 826.7 279"/><path d="M761 204.1 A80.5 76.9 0 0 1 841.5 281"/><path d="M761 190.4 A92.5 90.6 0 0 1 853.5 281"/><path d="M761 180.3 A103.4 100.7 0 0 1 864.4 281"/><path d="M761 171.1 A112.5 109.9 0 0 1 873.5 281"/><path d="M841.5 281 A80.5 67.2 0 0 1 761 348.2"/><path d="M853.3 281 A92.3 81.3 0 0 1 761 362.3"/><path d="M865 281 A104.0 92.3 0 0 1 761 373.3"/><path d="M874.4 281 A113.4 102.1 0 0 1 761 383.1"/><path d="M881.2 281 A120.2 110.0 0 0 1 761 391"/></g><ellipse cx="830.5" cy="278.5" rx="16" ry="11" fill="none" stroke="#E00000" stroke-width="3"/><ellipse cx="878.5" cy="281" rx="9" ry="7.5" fill="none" stroke="#E00000" stroke-width="3"/><path d="M827.3 283 V445.5 M761 395 V445.5 M761 432.5 H837" stroke="#E00000" stroke-width="1" fill="none"/><path d="M761 432.5 l6 -3.5 v7 z M827 432.5 l-6 -3.5 v7 z" fill="#E00000"/><path d="M736.4 434 V461.8 H763.5" stroke="#000060" stroke-width="1.3" fill="none"/></svg>
<span class="lb sans" style="left:149px;top:54.5px;letter-spacing:-0.62px;"><u>F</u>inal Pitch</span>
<div class="ed sans" style="left:156px;top:73px;width:60px;height:22px;">5.0</div>
<span class="lb sans" style="left:26.4px;top:270.5px;letter-spacing:-0.3px;">Rev./ Height</span>
<div class="ed sans" style="left:23px;top:289px;width:26px;height:22px;">10</div>
<div class="ed sans" style="left:53px;top:289px;width:60px;height:22px;">50.0</div>
<span class="lb sans" style="left:186.3px;top:270.5px;letter-spacing:-0.56px;"><u>I</u>nitial Pitch</span>
<div class="ed sans" style="left:185px;top:287px;width:60px;height:22px;">5.0</div>
<span class="lb sans" style="left:432.5px;top:113.8px;letter-spacing:-0.62px;">Fi<u>n</u>al Pitch</span>
<div class="ed sans" style="left:429px;top:133px;width:60px;height:22px;">2.0</div>
<span class="lb sans" style="left:299.4px;top:153.8px;letter-spacing:-0.56px;">Ini<u>t</u>ial Pitch</span>
<div class="ed sans" style="left:297px;top:172px;width:60px;height:22px;">2.0</div>
<span class="lb sans" style="left:401.5px;top:304.5px;letter-spacing:-0.82px;"><u>R</u>adius</span>
<div class="ed sans" style="left:390px;top:323px;width:60px;height:22px;">20.0</div>
<span class="lb sans" style="left:30.3px;top:317px;font-weight:bold;font-size:13px;font-family:'Liberation Mono',monospace;letter-spacing:0;color:#0000C0;">Z</span>
<span class="lb sans" style="left:70.3px;top:358.5px;font-weight:bold;font-size:13px;font-family:'Liberation Mono',monospace;letter-spacing:0;color:#0000C0;">X</span>
<span class="lb sans" style="left:285.8px;top:317px;font-weight:bold;font-size:13px;font-family:'Liberation Mono',monospace;letter-spacing:0;color:#000060;">Y</span>
<span class="lb sans" style="left:325.5px;top:358.5px;font-weight:bold;font-size:13px;font-family:'Liberation Mono',monospace;letter-spacing:0;color:#000060;">X</span>
<div style="left:121px;top:287px;width:28px;height:26px;border:1px solid #D5D2C3;border-radius:3px;background:#ECE9D8;"><svg width="20" height="20" viewBox="0 0 20 20" style="left:3px;top:3px;"><path d="M10 1 L14 5.5 H11.5 V8.5 H14.5 V6 L19 10 L14.5 14 V11.5 H11.5 V14.5 H14 L10 19 L6 14.5 H8.5 V11.5 H5.5 V14 L1 10 L5.5 6 V8.5 H8.5 V5.5 H6 Z" fill="#F0EEE2" stroke="#ACA899" stroke-width="1.1" stroke-linejoin="miter"/></svg></div>
<div style="left:187px;top:327px;width:28px;height:27px;border:1px solid #2A4FA8;border-radius:3px;background:#F4F3EC;box-shadow:inset 0 0 0 2px #A9C4F5;"><svg width="20" height="20" viewBox="0 0 20 20" style="left:3px;top:3.5px;"><path d="M10 1 L14 5.5 H11.5 V8.5 H14.5 V6 L19 10 L14.5 14 V11.5 H11.5 V14.5 H14 L10 19 L6 14.5 H8.5 V11.5 H5.5 V14 L1 10 L5.5 6 V8.5 H8.5 V5.5 H6 Z" fill="#fff" stroke="#222" stroke-width="1.1" stroke-linejoin="miter"/></svg></div>
<div style="left:33.0px;top:395.8px;width:13px;height:13px;border-radius:50%;border:1px solid #36566E;background:radial-gradient(circle at 60% 60%,#fff,#E4E3DA);"><div style="left:3px;top:3px;width:5px;height:5px;border-radius:50%;background:radial-gradient(circle at 40% 40%,#6BD86B,#1E9A1E);"></div></div>
<span class="lb sans" style="left:49.5px;top:395.3px;letter-spacing:-0.7px;font-size:11px;">CW</span>
<div style="left:87.0px;top:395.8px;width:13px;height:13px;border-radius:50%;border:1px solid #36566E;background:radial-gradient(circle at 60% 60%,#fff,#E4E3DA);"></div>
<span class="lb sans" style="left:103.5px;top:395.3px;letter-spacing:-0.8px;font-size:11px;">CCW</span>
<div class="xpbtn" style="left:334px;top:397px;width:52px;height:27px;"><svg width="19" height="18" viewBox="0 0 22 20" style="left:17px;top:4px;"><path d="M2 10 L5 8 L9 13 C12 8 15 4 20 1 L21 2 C16 7 12 13 9.5 19 L8 19 Z" fill="#3EC83E" stroke="#1F8A1F" stroke-width="1"/></svg></div>
<div style="left:394px;top:397px;width:52px;height:27px;border:1px solid #D2CFC0;border-radius:3px;background:#ECE9D8;"><svg width="26" height="26" viewBox="0 0 26 26" style="left:12px;top:0px;"><circle cx="13" cy="12.5" r="12" fill="#ACA899"/><path d="M13 4 V21 M4.5 12.5 H21.5" stroke="#ECE9D8" stroke-width="4"/></svg></div>
<div class="xpbtn" style="left:453px;top:397px;width:52px;height:27px;"><span class="sans" style="left:18.5px;top:-2px;font-size:25px;line-height:29px;font-weight:bold;color:#C8C8D0;-webkit-text-stroke:2.4px #2A2A30;paint-order:stroke fill;">?</span></div>
</div>
<div style="left:968px;top:85px;width:31px;height:542px;background:#ECE9D8;border-left:1px solid #fff;">
<div style="left:1px;top:0;width:3px;height:542px;background:#F4F2E8;"></div>
<svg width="30" height="542" viewBox="969 85 30 542" style="left:0;top:0;"><path d="M973.5 90.5 H996" stroke="#fff" stroke-width="1"/><path d="M973.5 91.5 H996.5 V89.5" stroke="#B8B5A5" stroke-width="1" fill="none"/><polyline points="988.7,100.5 990.0,101.9 991.0,103.5 991.6,105.3 991.9,107.1 991.8,108.9 991.2,110.6 990.4,112.2 989.3,113.5 987.9,114.5 986.4,115.2 984.8,115.6 983.2,115.6 981.6,115.3 980.2,114.7 979.0,113.8 978.0,112.7 977.2,111.5 976.8,110.1 976.6,108.7 976.7,107.3 977.2,106.0 977.8,104.9 978.7,103.9 979.7,103.2 980.8,102.7 982.0,102.5 983.2,102.5 984.3,102.7 985.3,103.2 986.2,103.9 986.9,104.7 987.4,105.6 987.7,106.6 987.7,107.5 987.6,108.5 987.3,109.3 986.8,110.1 986.2,110.7 985.5,111.1 984.7,111.4 983.9,111.5 983.2,111.4 982.5,111.2 981.9,110.9 981.4,110.4 981.1,109.9 980.8,109.4 980.7,108.8 980.8,108.3 980.9,107.8 981.1,107.3 981.5,107.0 981.8,106.7 982.2,106.6 982.5,106.5 982.9,106.6 983.2,106.7" stroke="#1C8C1C" stroke-width="1.3" fill="none"/><path d="M980 130 L989.5 123 Q992 122.5 992.5 125.5 L983 133.5 Z" fill="#F2B81A" stroke="#C08A10" stroke-width="0.6"/><path d="M980 130 L983 133.5 L979.5 136 Q977 136 977.5 133 Z" fill="#E87A6A"/><path d="M979.5 130.5 L983 134" stroke="#402010" stroke-width="1.2"/><path d="M976.5 145.5 L988 159.5" stroke="#111" stroke-width="1.5"/><text x="984.5" y="155" font-family="Liberation Sans,sans-serif" font-weight="bold" font-size="13" fill="#E03010">?</text><path d="M977.5 166.5 H986 L989.5 170 V181.5 H977.5 Z" fill="#DCEBFA" stroke="#8AA4CC"/><path d="M986 166.5 V170 H989.5" fill="#fff" stroke="#8AA4CC"/><path d="M979 173 H988 V180 H979 Z" fill="#BCD8F6"/><path d="M977 189.5 H991 V203.5 H977 Z" fill="#4848B8" stroke="#28287A"/><rect x="980" y="190" width="8" height="6" fill="#E8EEF8"/><rect x="980" y="199" width="8" height="4.5" fill="#C8CCE0"/><rect x="981.5" y="200" width="2.5" height="3" fill="#28287A"/><circle cx="984" cy="218" r="7.5" fill="#fff" stroke="#1C5CC0" stroke-width="1.4"/><path d="M984 210.5 A7.5 7.5 0 0 0 977.5 222 L984 218 Z" fill="#2A7AE0"/><path d="M984 210.5 V225.5 M976.5 218 H991.5 M980 224 Q984 214 988 224" stroke="#1C5CC0" stroke-width="1" fill="none"/><path d="M977 236 L984 232.5 L991 236 V244.5 L984 248 L977 244.5 Z" fill="#E6F4D0" stroke="#3C8C1C" stroke-width="1.3"/><path d="M977 236 L984 232.5 L991 236 L984 239.5 Z" fill="#4CAE2C" stroke="#3C8C1C"/><path d="M984 239.5 V248 M977 240.5 L984 244 L991 240.5" stroke="#3C8C1C" fill="none"/><rect x="976.5" y="254.5" width="4" height="4" fill="#fff" stroke="#A01890" stroke-width="1.4"/><rect x="976.5" y="259.5" width="4" height="4" fill="#fff" stroke="#A01890" stroke-width="1.4"/><rect x="976.5" y="264.5" width="4" height="4" fill="#fff" stroke="#A01890" stroke-width="1.4"/><rect x="987.5" y="254.5" width="4" height="4" fill="#fff" stroke="#E86020" stroke-width="1.4"/><rect x="987.5" y="259.5" width="4" height="4" fill="#fff" stroke="#E8C020" stroke-width="1.4"/><rect x="987.5" y="264.5" width="4" height="4" fill="#fff" stroke="#2080E0" stroke-width="1.4"/><path d="M981.5 261.5 H985 M984 259 L987 261.5 L984 264 Z" stroke="#2080D0" fill="#2080D0"/><rect x="976" y="278" width="16" height="11" fill="#3A4A6A"/><rect x="977" y="279" width="5" height="3" fill="#D02020"/><rect x="983" y="279" width="4" height="3" fill="#E8D020"/><rect x="977" y="284" width="5" height="4" fill="#2060D0"/><rect x="983" y="285" width="4" height="3" fill="#E06020"/><path d="M984 283.5 H990 M988 281 L991 283.5 L988 286" stroke="#8AB0E8" stroke-width="1.3" fill="none"/><rect x="988" y="279" width="3" height="2" fill="#30A030"/><path d="M977 298 L991 312 M991 298 L984 306" stroke="#222" stroke-width="1.3"/><path d="M984 300 V314 M977 313 L984 305 L991.5 313" stroke="#A87818" stroke-width="1.6" fill="none"/><path d="M978 314.5 h1.5 m1.5 0 h1.5" stroke="#222"/><path d="M971 320.5 H998" stroke="#C5C2B4"/><path d="M971 321.5 H998" stroke="#fff"/><path d="M971 488.5 H998" stroke="#C5C2B4"/><path d="M971 489.5 H998" stroke="#fff"/><path d="M971 541 H998" stroke="#C5C2B4"/><path d="M971 542 H998" stroke="#fff"/><path d="M971 593 H998" stroke="#C5C2B4"/><path d="M971 594 H998" stroke="#fff"/><path d="M973.5 325.5 H996" stroke="#fff" stroke-width="1"/><path d="M973.5 326.5 H996.5 V324.5" stroke="#B8B5A5" stroke-width="1" fill="none"/><path d="M978 344 L983 338 H988 V342 H991 V347 H986 V350 H981 V345 Z" fill="#ACA899"/><path d="M978 369 L987 359 M978 365 L985 358 M988 358 v4 m-2 -2 h4 M979 368 v4 m-2 -2 h4" stroke="#ACA899" stroke-width="1.3" fill="none"/><circle cx="984" cy="386" r="6" fill="none" stroke="#ACA899" stroke-width="1.4"/><path d="M977 382 L982 384 L980 379" stroke="#ACA899" stroke-width="1.3" fill="none"/><path d="M978 413.5 V408.5 H989 V402.5 M977 406.5 L983 401.5" stroke="#ACA899" stroke-width="2" fill="none"/><rect x="978" y="424" width="13" height="13" fill="#ACA899"/><path d="M976 423 h3 v3 h-3z M990 423 h3 v3 h-3z M976 435 h3 v3 h-3z M990 435 h3 v3 h-3z" fill="#ACA899"/><path d="M981 445.5 H988 L992 449.5 V455.5 L988 459.5 H981 L977 455.5 V449.5 Z" fill="#ACA899"/><path d="M976 446.5 L982 453.5" stroke="#ACA899" stroke-width="1.4"/><circle cx="984" cy="475" r="6.5" fill="none" stroke="#ACA899" stroke-width="1.3"/><path d="M977.5 475 H990.5 M984 468.5 V481.5 M980 470 Q984 473 988 470 M980 480 Q984 477 988 480" stroke="#ACA899" stroke-width="1" fill="none"/><path d="M983 497 H991 V504 H983 Z M977 504 L982 499 V509 H977 Z" fill="#ACA899"/><path d="M976 504 L983 498" stroke="#ACA899" stroke-width="1.3"/><path d="M983 519 H991 V526 H983 Z M977 526 L982 521 V531 H977 Z" fill="#ACA899"/><path d="M976 526 L983 520" stroke="#ACA899" stroke-width="1.3"/><path d="M979 553.5 H991 V564.5 H979 Z" fill="#ACA899"/><path d="M975 558.5 L983 549.5 M976 554.5 h5" stroke="#ACA899" stroke-width="1.4" fill="none"/><path d="M979 575 H991 V587 H979 Z" fill="#ACA899"/><rect x="981" y="581" width="8" height="4" fill="#ECE9D8"/><path d="M975 580 L983 571 M976 576 h5" stroke="#ACA899" stroke-width="1.4" fill="none"/><path d="M977 601.5 V614.5 M991 603.5 V614.5 M978 608.5 H990 M981 605.5 L978 608.5 L981 611.5 M976 607.5 L982 600.5" stroke="#ACA899" stroke-width="1.4" fill="none"/><path d="M975 624 L981 619 M984 622 h8" stroke="#ACA899" stroke-width="1.4"/></svg>
</div>
<div id="st">
<div class="stb" style="left:105px;width:26px;"><span class="mono">2D</span></div>
<div class="stb" style="left:137px;width:55px;"><span class="mono">Gview</span></div>
<div class="stb" style="left:199px;width:38px;"><span class="mono">Planes</span></div>
<span class="mono" style="left:254px;top:6px;font-size:12px;letter-spacing:-1.2px;">Z</span>
<div class="scombo" style="left:260px;width:111px;"><div style="left:1px;top:1px;width:91px;height:15px;background:#FFFF80;"></div><span class="mono" style="left:2px;top:2px;font-size:12px;letter-spacing:-1.2px;">0.0</span><div class="sdd" style="left:94px;"><svg width="15" height="15" style="left:0;top:0"><path d="M4 5.5 L7.5 9 L11 5.5" stroke="#4D6185" stroke-width="2" fill="none"/></svg></div></div>
<div style="left:376px;top:3px;width:55px;height:19px;background:#0CF80C;text-align:center;"><span class="sans" style="position:static !important;font-size:11px;line-height:17px;color:#043;">10</span></div>
<svg width="12" height="8" style="left:433px;top:9px"><path d="M0.5 0.5 H10.5 L5.5 6.5 Z" fill="#000"/></svg>
<span class="mono" style="left:459.5px;top:5px;font-size:12px;letter-spacing:-1.2px;">Level</span>
<div class="scombo" style="left:488px;width:151px;"><span class="mono" style="left:2px;top:2px;font-size:12px;letter-spacing:-1.2px;">1</span><div class="sdd" style="left:134px;"><svg width="15" height="15" style="left:0;top:0"><path d="M4 5.5 L7.5 9 L11 5.5" stroke="#4D6185" stroke-width="2" fill="none"/></svg></div></div>
<div class="stb" style="left:645px;width:74px;"><span class="mono">Attributes</span></div>
<div class="scombo" style="left:724px;width:33px;"><span class="mono" style="left:2px;top:3px;font-size:17px;line-height:17px;letter-spacing:0;">*</span><div class="sdd" style="left:16px;"><svg width="15" height="15" style="left:0;top:0"><path d="M4 5.5 L7.5 9 L11 5.5" stroke="#4D6185" stroke-width="2" fill="none"/></svg></div></div>
<div class="scombo" style="left:762px;width:62px;"><div style="left:4px;top:7px;width:39px;height:3px;background:#000;"></div><div class="sdd" style="left:45px;"><svg width="15" height="15" style="left:0;top:0"><path d="M4 5.5 L7.5 9 L11 5.5" stroke="#4D6185" stroke-width="2" fill="none"/></svg></div></div>
<div class="scombo" style="left:830px;width:64px;"><div style="left:4px;top:8px;width:41px;height:1px;background:#000;"></div><div class="sdd" style="left:47px;"><svg width="15" height="15" style="left:0;top:0"><path d="M4 5.5 L7.5 9 L11 5.5" stroke="#4D6185" stroke-width="2" fill="none"/></svg></div></div>
<div class="stb" style="left:899px;width:45px;"><span class="mono">WCS</span></div>
<div class="stb" style="left:950px;width:60px;"><span class="mono">Groups</span></div>
</div>
<div id="tk">
<div style="left:-30px;top:4px;width:102px;height:29px;border-radius:0 9px 9px 0/0 13px 13px 0;background:linear-gradient(#4C9F4C 0%,#62B862 10%,#3D9A3D 25%,#3A963A 60%,#2E822E 88%,#256B25 100%);box-shadow:inset -4px 0 5px -2px #1E5E1E;"></div>
<div style="left:-4px;top:12px;width:7px;height:7px;background:#D8E848;"></div><div style="left:-4px;top:20px;width:7px;height:6px;background:#F5C21A;"></div>
<span style="left:11px;top:7px;font-family:'Liberation Sans','Noto Sans CJK SC',sans-serif;font-size:19px;font-style:italic;font-weight:300;color:#fff;white-space:nowrap;line-height:22px;letter-spacing:0px;text-shadow:1px 1px 1px #2A5A2A;">开始</span>
<svg width="8" height="26" style="left:80px;top:6px"><rect x="3" y="2" width="2" height="2" fill="#17389C"/><rect x="4" y="3" width="1.6" height="1.6" fill="#6C9CF0"/><rect x="0" y="4" width="2" height="2" fill="#17389C"/><rect x="1" y="5" width="1.6" height="1.6" fill="#6C9CF0"/><rect x="3" y="6" width="2" height="2" fill="#17389C"/><rect x="4" y="7" width="1.6" height="1.6" fill="#6C9CF0"/><rect x="0" y="8" width="2" height="2" fill="#17389C"/><rect x="1" y="9" width="1.6" height="1.6" fill="#6C9CF0"/><rect x="3" y="10" width="2" height="2" fill="#17389C"/><rect x="4" y="11" width="1.6" height="1.6" fill="#6C9CF0"/><rect x="0" y="12" width="2" height="2" fill="#17389C"/><rect x="1" y="13" width="1.6" height="1.6" fill="#6C9CF0"/><rect x="3" y="14" width="2" height="2" fill="#17389C"/><rect x="4" y="15" width="1.6" height="1.6" fill="#6C9CF0"/><rect x="0" y="16" width="2" height="2" fill="#17389C"/><rect x="1" y="17" width="1.6" height="1.6" fill="#6C9CF0"/><rect x="3" y="18" width="2" height="2" fill="#17389C"/><rect x="4" y="19" width="1.6" height="1.6" fill="#6C9CF0"/><rect x="0" y="20" width="2" height="2" fill="#17389C"/><rect x="1" y="21" width="1.6" height="1.6" fill="#6C9CF0"/></svg>
<div style="left:92px;top:8px;width:158px;height:22px;border-radius:3px;background:linear-gradient(#4A8DF0,#3A7BEA 30%,#3573E3);box-shadow:inset 0 0 0 1px #4C8CF0, 0 0 0 1px #2456C8;"></div>
<svg width="18" height="18" viewBox="0 0 18 18" style="left:100px;top:10px"><path d="M4 1 H13 L16 4 V17 H4 Z" fill="#fff" stroke="#8898B8" stroke-width="0.8"/><ellipse cx="8" cy="9" rx="4.5" ry="4" fill="none" stroke="#2060D0" stroke-width="2"/><path d="M2 11 Q8 2 14 5" stroke="#E8B020" stroke-width="1.2" fill="none"/></svg>
<span class="mono" style="left:120px;top:12px;line-height:14px;font-size:12px;letter-spacing:-1.2px;color:#fff;font-family:'Liberation Mono','Noto Sans CJK SC',monospace;">MasterCAM<span style="position:static !important;letter-spacing:0;">可以画</span>...</span>
<div style="left:251px;top:8px;width:160px;height:22px;border-radius:3px;background:#1E52B7;box-shadow:inset 0 1px 2px #123A8C, 0 0 0 1px #1A47A8;"></div>
<svg width="18" height="18" viewBox="0 0 18 18" style="left:261px;top:10px"><path d="M2 2 L6 2 L15 16 L11 16 Z" fill="#fff"/><path d="M13 1 L17 1 L6 17 L2 17 Z" fill="#E8E8E8" stroke="#555" stroke-width="0.6"/></svg>
<span class="mono" style="left:282px;top:12px;line-height:14px;font-size:12px;letter-spacing:-1.2px;color:#fff;">Mastercam Mill X...</span>
<svg width="8" height="26" style="left:838px;top:6px"><rect x="3" y="2" width="2" height="2" fill="#17389C"/><rect x="4" y="3" width="1.6" height="1.6" fill="#6C9CF0"/><rect x="0" y="4" width="2" height="2" fill="#17389C"/><rect x="1" y="5" width="1.6" height="1.6" fill="#6C9CF0"/><rect x="3" y="6" width="2" height="2" fill="#17389C"/><rect x="4" y="7" width="1.6" height="1.6" fill="#6C9CF0"/><rect x="0" y="8" width="2" height="2" fill="#17389C"/><rect x="1" y="9" width="1.6" height="1.6" fill="#6C9CF0"/><rect x="3" y="10" width="2" height="2" fill="#17389C"/><rect x="4" y="11" width="1.6" height="1.6" fill="#6C9CF0"/><rect x="0" y="12" width="2" height="2" fill="#17389C"/><rect x="1" y="13" width="1.6" height="1.6" fill="#6C9CF0"/><rect x="3" y="14" width="2" height="2" fill="#17389C"/><rect x="4" y="15" width="1.6" height="1.6" fill="#6C9CF0"/><rect x="0" y="16" width="2" height="2" fill="#17389C"/><rect x="1" y="17" width="1.6" height="1.6" fill="#6C9CF0"/><rect x="3" y="18" width="2" height="2" fill="#17389C"/><rect x="4" y="19" width="1.6" height="1.6" fill="#6C9CF0"/><rect x="0" y="20" width="2" height="2" fill="#17389C"/><rect x="1" y="21" width="1.6" height="1.6" fill="#6C9CF0"/></svg>
<svg width="18" height="12" viewBox="0 0 18 12" style="left:850px;top:14px"><rect x="0.5" y="2.5" width="16" height="8.5" rx="1" fill="#F4F4F4" stroke="#223"/><path d="M3 5 H14 M3 7 H14 M5 9 H12" stroke="#223" stroke-width="1" stroke-dasharray="1 1"/><path d="M4 2 Q6 0 9 1" stroke="#223" fill="none"/></svg>
<div style="left:886px;top:0;width:113px;height:34px;background:linear-gradient(#1A9AEC 0%,#3DB3F5 8%,#139AEA 18%,#1290E4 60%,#0F84DC 88%,#0B62B8 100%);border-left:1px solid #0C5CB0;box-shadow:inset 1px 0 0 #36AAF0;"></div>
<div style="left:877px;top:10px;width:19px;height:19px;border-radius:50%;background:radial-gradient(circle at 40% 35%,#7CC4FA,#2B7FE3 70%,#1A5CC0);border:1px solid #9CD0FA;"><svg width="17" height="17" style="left:0;top:0"><path d="M10 4.5 L6 8.5 L10 12.5" stroke="#fff" stroke-width="2" fill="none"/></svg></div>
<svg width="20" height="20" viewBox="0 0 20 20" style="left:896px;top:8px"><circle cx="10" cy="9" r="7" fill="#28B428"/><circle cx="8" cy="7" r="3" fill="#7CE47C"/><path d="M1 10 L5 8 M15 8 L19 10 M8 16 H12 V19 H8 Z" stroke="#187018" fill="#187018"/></svg>
<svg width="20" height="20" viewBox="0 0 20 20" style="left:912px;top:8px"><rect x="8" y="1" width="10" height="8" fill="#3C50A0" stroke="#C8D0E8"/><rect x="2" y="6" width="10" height="8" fill="#4860B8" stroke="#C8D0E8"/><path d="M4 16 H11 L12 18 H3 Z M11 11 H17 L18 13 H10 Z" fill="#C8D0E8"/></svg>
<svg width="16" height="18" viewBox="0 0 16 18" style="left:934px;top:9px"><path d="M8 1 Q11 3 15 3 V9 Q14 14 8 17 Q2 14 1 9 V3 Q5 3 8 1 Z" fill="#E02020" stroke="#F8D8D8" stroke-width="1.2"/><path d="M8 5 V12 M5 8 H11" stroke="#fff" stroke-width="2"/></svg>
<span class="sans" style="left:956px;top:12px;font-size:12px;line-height:14px;color:#fff;letter-spacing:0.2px;">10:02</span>
</div>
</div>
</body></html>
